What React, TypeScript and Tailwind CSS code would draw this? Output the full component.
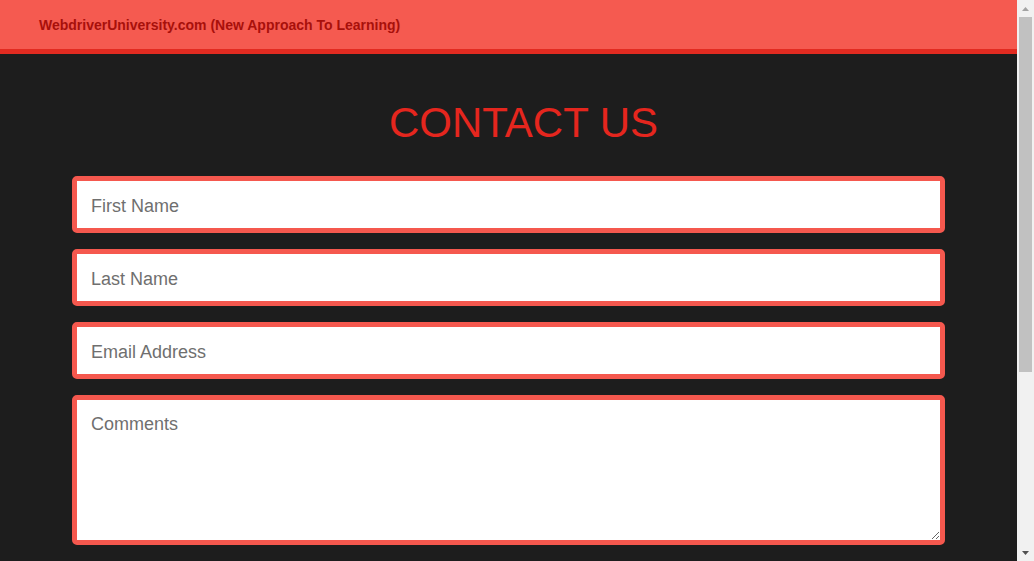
export default function App() {
  const inputCls =
    'w-full h-[57px] bg-white border-[5px] border-[#f5584e] rounded-[5px] px-[14px] pt-[3px] text-[18px] text-[#555] placeholder:text-[#6f6f6f] outline-none';

  return (
    <div className="h-[561px] flex overflow-hidden bg-[#1d1d1d] font-['Liberation_Sans',Arial,sans-serif]">
      <div className="flex-1 min-w-0">
        <header className="h-[54px] bg-[#f55a50] border-b-[5px] border-[#e22b21] flex items-center pl-[39px]">
          <span className="text-[14px] font-bold text-[#a8100b] mt-[1px]">
            WebdriverUniversity.com (New Approach To Learning)
          </span>
        </header>

        <main className="px-[72px]">
          <h1 className="text-center text-[42px] leading-none text-[#e5261e] pt-[48px] pb-[32px] pl-[30px]">
            CONTACT US
          </h1>

          <form className="flex flex-col gap-4">
            <input className={inputCls} placeholder="First Name" />
            <input className={inputCls} placeholder="Last Name" />
            <input className={inputCls} placeholder="Email Address" />
            <textarea
              className="w-full h-[150px] bg-white border-[5px] border-[#f5584e] rounded-[5px] px-[14px] py-[11px] text-[18px] text-[#555] placeholder:text-[#6f6f6f] outline-none resize-y"
              placeholder="Comments"
            />
          </form>
        </main>
      </div>

      {/* browser scrollbar */}
      <div className="w-[17px] shrink-0 bg-[#f1f1f1] flex flex-col items-center">
        <div className="h-[17px] flex items-center justify-center">
          <svg width="7" height="4" viewBox="0 0 7 4">
            <path d="M3.5 0L7 4H0z" fill="#a3a3a3" />
          </svg>
        </div>
        <div className="w-[13px] h-[355px] bg-[#c1c1c1]" />
        <div className="flex-1" />
        <div className="h-[17px] flex items-center justify-center">
          <svg width="7" height="4" viewBox="0 0 7 4">
            <path d="M0 0H7L3.5 4z" fill="#505050" />
          </svg>
        </div>
      </div>
    </div>
  );
}
